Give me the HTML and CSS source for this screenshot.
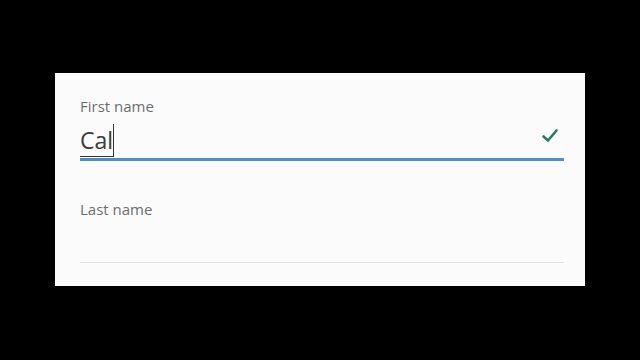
FILE: index.html
```html
<!DOCTYPE html>
<html>
<head>
<meta charset="utf-8">
<link rel="stylesheet" href="styles.css">
</head>
<body>
<div class="card">
  <div class="field">
    <div class="label">First name</div>
    <div class="input active">
      <span class="value"><span class="compose">Cal</span></span>
      <svg class="check" width="16" height="14" viewBox="0 0 16 14"><path d="M1.5 7.5 L6 11.5 L14.5 1.5" fill="none" stroke="#2b7a62" stroke-width="2.6" stroke-linecap="round" stroke-linejoin="round"/></svg>
    </div>
  </div>
  <div class="field second">
    <div class="label">Last name</div>
    <div class="input"></div>
  </div>
</div>
</body>
</html>
```
FILE: styles.css
```css
html, body { margin: 0; padding: 0; background: #000; width: 640px; height: 360px; overflow: hidden; }
body { padding-top: 73px; box-sizing: border-box; }
.card {
  margin-left: 55px;
  width: 530px;
  height: 213px;
  background: #fbfbfb;
  box-sizing: border-box;
  padding: 23px 21px 0 25px;
  font-family: "Open Sans", "Noto Sans", sans-serif;
}
.label { font-size: 15px; line-height: 21px; color: #6e6e6e; }
.input {
  height: 43px;
  display: flex;
  align-items: center;
  justify-content: space-between;
  border-bottom: 1px solid #e4e4e4;
  box-sizing: border-box;
}
.input.active { border-bottom: 3px solid #4a8fd6; height: 44px; }
.value { font-size: 23px; color: #3a3a3a; line-height: 34px; padding-top: 4px; }
.compose { display: inline-block; border-right: 1.5px solid #333; border-bottom: 1.5px solid #333; line-height: 32px; }
.check { margin-right: 6px; margin-top: -4px; }
.second { margin-top: 38px; }
```
